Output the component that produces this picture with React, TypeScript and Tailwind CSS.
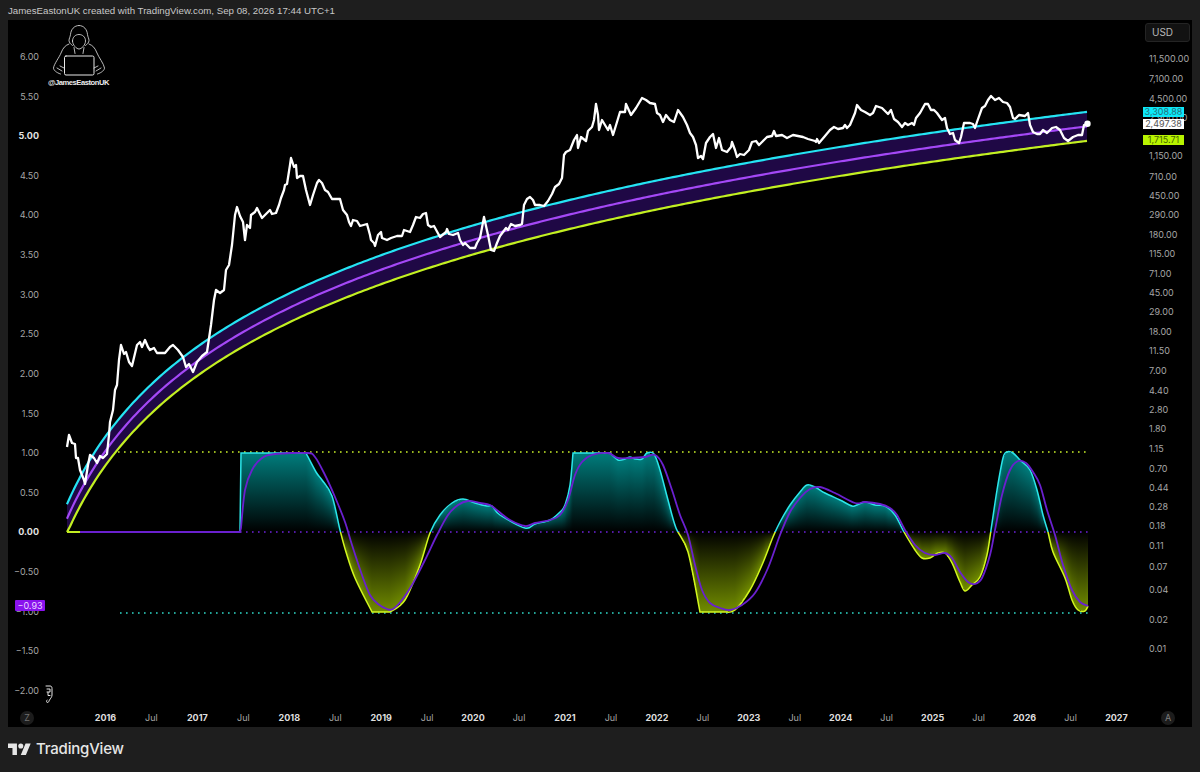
type Pt = [number, number];

// page coordinates, the svg viewBox is offset so they can be read straight off the screenshot
const price: Pt[] = [
  [67,447],[69,435],[72,443],[75,444],[76,458],[78,458],[80,470],[84,480],[85,484],[88,465],[90,455],[94,458],[97,463],[100,456],[103,458],[107,454],[109,435],[110,422],[113,410],[115,390],[117,385],[119,360],[121,345],[124,354],[126,352],[129,362],[132,366],[137,345],[140,342],[142,347],[145,340],[148,347],[150,350],[154,348],[157,353],[165,353],[170,347],[173,345],[178,350],[183,357],[186,367],[189,364],[193,372],[197,362],[202,356],[207,352],[211,325],[214,300],[216,290],[220,293],[224,290],[226,270],[229,265],[232,245],[235,215],[237,207],[240,216],[243,222],[245,240],[247,225],[250,228],[251,215],[255,212],[257,208],[262,218],[267,213],[270,210],[272,214],[276,213],[279,205],[281,198],[284,190],[285,185],[287,184],[290,165],[291,158],[294,167],[296,165],[297,178],[300,176],[303,176],[306,190],[310,205],[313,195],[317,183],[319,180],[322,183],[325,190],[328,192],[332,199],[336,199],[340,199],[343,210],[347,215],[349,222],[351,226],[353,220],[357,221],[360,226],[367,224],[370,235],[371,240],[374,243],[375,246],[378,235],[381,232],[382,238],[387,240],[391,238],[397,236],[402,236],[404,230],[410,232],[413,225],[416,217],[420,218],[423,214],[426,213],[428,225],[431,227],[434,226],[440,237],[446,232],[447,229],[449,234],[453,235],[458,233],[460,240],[463,245],[465,243],[470,248],[475,248],[477,243],[480,238],[484,217],[488,235],[491,250],[494,251],[497,243],[500,236],[503,232],[506,228],[508,230],[511,224],[515,226],[520,225],[522,224],[524,205],[527,199],[530,197],[533,200],[535,205],[540,205],[544,206],[548,201],[552,194],[555,187],[559,184],[562,178],[564,155],[566,152],[570,150],[574,140],[577,135],[578,148],[581,137],[586,141],[588,131],[592,127],[594,120],[596,104],[598,115],[599,130],[602,120],[605,125],[608,130],[610,125],[613,135],[617,122],[620,112],[625,112],[626,104],[631,115],[636,108],[642,98],[646,100],[650,103],[655,104],[657,113],[660,115],[663,122],[666,115],[670,120],[674,122],[678,110],[683,117],[687,125],[690,133],[693,137],[696,145],[698,158],[701,156],[703,159],[706,143],[710,137],[713,134],[716,148],[719,138],[722,150],[727,152],[731,147],[732,142],[735,150],[737,157],[740,154],[744,155],[749,150],[752,142],[756,141],[759,145],[763,141],[767,137],[772,136],[774,131],[776,136],[782,135],[787,138],[793,135],[803,137],[808,139],[815,141],[816,142],[817,139],[819,143],[825,136],[830,130],[834,127],[838,129],[843,128],[845,125],[847,128],[850,125],[855,113],[857,105],[861,110],[865,112],[870,115],[873,113],[876,106],[882,108],[886,112],[888,114],[891,110],[894,119],[898,122],[902,127],[905,123],[908,125],[912,123],[914,125],[916,118],[920,113],[925,104],[928,104],[931,110],[934,110],[937,113],[942,120],[945,118],[947,128],[950,134],[953,133],[955,140],[959,143],[961,137],[964,123],[970,123],[973,124],[975,128],[977,122],[982,108],[985,106],[988,100],[991,96],[995,100],[999,98],[1003,102],[1007,103],[1010,107],[1013,118],[1015,119],[1019,115],[1025,116],[1028,113],[1030,125],[1033,132],[1037,134],[1040,134],[1043,130],[1047,133],[1052,128],[1056,127],[1060,130],[1064,138],[1068,141],[1073,137],[1078,135],[1082,135],[1084,125],[1088,124],
];

// the three bands are the same log curve, shifted
const band = (k: number): Pt[] => {
  const pts: Pt[] = [];
  for (let x = 67; x <= 1088; x += 3) pts.push([x, Math.min(532, k - 135 * Math.log((x - 8) / 282))]);
  return pts;
};
const upper = band(293);
const middle = band(307.5);
const lower = band(322);

// split at the sharp corners so the smoothing does not overshoot there
const oscSegments: Pt[][] = [
  [[240,532],[241,453]],
  [[241,453],[306,453]],
  [[306,453],[316,472],[322,480],[332,496],[340,530],[346,552],[355,578],[372,612]],
  [[372,612],[390,612]],
  [[390,612],[405,600],[420,565],[430,533],[440,515],[452,503],[463,499],[475,503],[487,506],[492,506],[500,515],[525,528],[535,524],[550,520],[560,512],[565,505],[570,485],[573,453]],
  [[573,453],[610,453]],
  [[610,453],[618,460],[625,459],[630,457],[635,459],[642,459],[647,453],[654,454],[660,470],[668,500],[676,528],[688,552],[700,612]],
  [[700,612],[725,612]],
  [[725,612],[735,610],[750,590],[762,565],[773,537],[780,522],[790,505],[800,492],[807,485],[815,487],[825,493],[840,500],[852,506],[857,505],[865,502],[875,505],[885,506],[895,515],[904,532],[915,550],[922,558],[930,558],[938,553],[945,553],[952,563],[960,582],[965,591],[972,585],[980,577],[987,555],[991,530],[997,490],[1003,458],[1007,452],[1013,453],[1020,460],[1030,470],[1037,490],[1043,515],[1048,532],[1053,552],[1065,578],[1072,600],[1078,610],[1085,611],[1088,606]],
];

const oscSignal: Pt[] = [[241,528],[245,490],[252,470],[262,458],[275,454],[307,453],[315,457],[325,475],[335,497],[345,522],[352,545],[362,575],[370,595],[378,604],[387,609],[393,609],[402,600],[412,585],[425,560],[437,535],[448,515],[458,505],[468,501],[480,503],[490,505],[498,511],[510,520],[525,526],[535,523],[550,520],[560,515],[568,500],[575,475],[582,462],[592,455],[608,453],[618,458],[630,458],[645,457],[655,455],[663,465],[672,490],[680,515],[688,535],[695,565],[702,590],[710,603],[720,608],[730,610],[742,605],[755,593],[768,568],[780,535],[790,512],[800,498],[810,489],[820,487],[835,493],[855,503],[865,502],[880,504],[890,508],[897,515],[905,530],[915,545],[925,553],[935,555],[945,553],[952,558],[960,572],[968,582],[975,584],[982,578],[990,555],[995,530],[1002,495],[1010,470],[1018,461],[1026,463],[1033,472],[1040,485],[1047,510],[1055,535],[1063,565],[1072,590],[1080,602],[1088,606]];

function smooth(pts: Pt[]) {
  let d = `${pts[0][0]} ${pts[0][1]}`;
  for (let i = 0; i < pts.length - 1; i++) {
    const p0 = pts[i - 1] ?? pts[i];
    const p1 = pts[i];
    const p2 = pts[i + 1];
    const p3 = pts[i + 2] ?? p2;
    const c1x = p1[0] + (p2[0] - p0[0]) / 6;
    const c1y = p1[1] + (p2[1] - p0[1]) / 6;
    const c2x = p2[0] - (p3[0] - p1[0]) / 6;
    const c2y = p2[1] - (p3[1] - p1[1]) / 6;
    d += ` C${c1x} ${c1y} ${c2x} ${c2y} ${p2[0]} ${p2[1]}`;
  }
  return d;
}

const lineOf = (pts: Pt[]) => 'M' + pts.map((p) => p.join(' ')).join(' L');
const oscLine = 'M' + oscSegments.map(smooth).join(' L');
const bandArea = 'M' + smooth(upper) + ' L' + smooth([...lower].reverse()) + ' Z';

// the fill fades from the line to zero in every single column, not across the whole pane
const oscFlat = oscSegments.flat();
const oscAt = (x: number) => {
  for (let i = 0; i < oscFlat.length - 1; i++) {
    const [x1, y1] = oscFlat[i];
    const [x2, y2] = oscFlat[i + 1];
    if (x >= x1 && x <= x2 && x2 > x1) return y1 + ((y2 - y1) * (x - x1)) / (x2 - x1);
  }
  return 532;
};
const oscColumns: { x: number; y: number; h: number; up: boolean; o: number }[] = [];
for (let x = 241; x < 1088; x++) {
  const y = oscAt(x + 0.5);
  const h = Math.abs(532 - y);
  if (h < 1) continue;
  oscColumns.push({ x, y: Math.min(y, 532), h, up: y < 532, o: Math.min(1, 0.35 + h / 35) });
}

const leftTicks = ['6.00','5.50','5.00','4.50','4.00','3.50','3.00','2.50','2.00','1.50','1.00','0.50','0.00','−0.50','−1.00','−1.50','−2.00'];

// 1,800.00 sits fully behind the lime price label in the reference
const rightTicks: [string, number][] = [
  ['11,500.00',59],['7,100.00',79],['4,500.00',98.5],['2,900.00',118],['',137],['1,150.00',156],['710.00',177],['450.00',196],['290.00',215],['180.00',235],['115.00',254],['71.00',274],['45.00',293],['29.00',312],['18.00',332],['11.50',351],['7.00',371],['4.40',391],['2.80',410],['1.80',429],['1.15',449],['0.70',469],['0.44',488],['0.28',507],['0.18',526],['0.11',546],['0.07',567],['0.04',590],['0.02',620],['0.01',649],
];

const timeTicks = ['2016','Jul','2017','Jul','2018','Jul','2019','Jul','2020','Jul','2021','Jul','2022','Jul','2023','Jul','2024','Jul','2025','Jul','2026','Jul','2027'];

function HackerLogo() {
  return (
    <g fill="none" stroke="#e8e8e8" strokeWidth="0.8" strokeLinejoin="round" strokeLinecap="round">
      <path d="M79 25.5c-5 0-8 4-8.500 9-.3 2.500-1.500 4-1.500 6 0 2 2 4 3.500 5M79 25.500c5 0 8 4 8.500 9 .3 2.500 1.500 4 1.500 6 0 2-2 4-3.500 5" />
      <path d="M72.500 41c0-4 3-6.500 6.500-6.500s6.500 2.500 6.500 6.500c0 4-4 8-6.500 8s-6.500-4-6.500-8z" />
      <path d="M69 44c-4 1.500-6 4-8 9-1.500 4-7 11-7.500 15 0 2 2.500 4.500 7 6M89 44c4 1.500 6 4 8 9 1.500 4 7 11 7.500 15 0 2-2.500 4.500-7 6" />
      <path d="M74 47.500l1 6M84 47.500l-1 6M60 66l4 2M98 66l-4 2M57 68l5 3M101 68l-5 3" />
      <rect x="64.500" y="56" width="29.500" height="19" rx="1.500" strokeWidth="1" />
    </g>
  );
}

export default function App() {
  return (
    <div className="flex h-[772px] w-[1200px] flex-col overflow-hidden bg-[#1e1e1e] font-['Inter',sans-serif]">
      <div className="flex h-5 items-center px-2 pt-0.5 font-['Liberation_Sans',sans-serif] text-[9.700px] text-[#c8c8c8]">
        JamesEastonUK created with TradingView.com, Sep 08, 2026 17:44 UTC+1
      </div>

      <div className="mx-2 grid h-[707px] grid-cols-[32px_1097px_55px] grid-rows-[688px_19px] bg-black">
        {/* left scale */}
        <div className="relative flex flex-col items-end pr-px pt-[17px] text-[9px] text-[#a6a6a6]">
          {leftTicks.map((t) => (
            <div key={t} className={`flex h-[39.62px] shrink-0 items-center ${t === '5.00' || t === '0.00' ? 'font-bold text-[#e4e4e4]' : ''}`}>
              {t}
            </div>
          ))}
          <div className="absolute left-[7px] top-[580px] flex h-[11px] w-[30px] items-center justify-center rounded-[1px] bg-[#8a12ee] text-[9px] text-[#e9d8ff]">
            −0.93
          </div>
        </div>

        {/* plot */}
        <div className="relative z-10">
          <svg width="1097" height="688" viewBox="40 20 1097 688" className="block">
            <defs>
              <linearGradient id="colUp" x1="0" y1="0" x2="0" y2="1">
                <stop offset="0" stopColor="#007c7c" />
                <stop offset="1" stopColor="#000000" />
              </linearGradient>
              <linearGradient id="colDown" x1="0" y1="0" x2="0" y2="1">
                <stop offset="0" stopColor="#000000" />
                <stop offset="1" stopColor="#718c00" />
              </linearGradient>
              <clipPath id="aboveZero"><rect x="40" y="20" width="1097" height="512" /></clipPath>
              <clipPath id="belowZero"><rect x="40" y="532" width="1097" height="176" /></clipPath>
            </defs>

            <path d={bandArea} fill="#1f0845" />
            <path d={lineOf([[67,532],[80,532]])} stroke="#c3ee22" strokeWidth="2" fill="none" />
            <path d={'M' + smooth(upper)} stroke="#25e4f4" strokeWidth="2.200" fill="none" />
            <path d={'M' + smooth(middle)} stroke="#a448f6" strokeWidth="2.200" fill="none" />
            <path d={'M' + smooth(lower)} stroke="#c3f022" strokeWidth="2.200" fill="none" />

            <g shapeRendering="crispEdges">
              {oscColumns.map((c) => (
                <rect key={c.x} x={c.x} y={c.y} width="1" height={c.h} fill={c.up ? 'url(#colUp)' : 'url(#colDown)'} opacity={c.o} />
              ))}
            </g>

            <line x1="118" y1="452" x2="1090" y2="452" stroke="#c9f02a" strokeWidth="1.600" strokeDasharray="1.600 4.400" />
            <line x1="240" y1="532" x2="1090" y2="532" stroke="#6d22d8" strokeWidth="1.600" strokeDasharray="1.600 4.400" />
            <line x1="120" y1="613" x2="1090" y2="613" stroke="#2fd8c8" strokeWidth="1.600" strokeDasharray="1.600 4.400" />

            <path d={oscLine} fill="none" stroke="#2be6ea" strokeWidth="1.500" clipPath="url(#aboveZero)" />
            <path d={oscLine} fill="none" stroke="#d2f71e" strokeWidth="1.500" clipPath="url(#belowZero)" />
            <path d={'M80 532 L240 532 L' + smooth(oscSignal)} fill="none" stroke="#6a20cf" strokeWidth="1.800" />

            <path d={lineOf(price)} fill="none" stroke="#ffffff" strokeWidth="2.300" strokeLinejoin="round" />
            <circle cx="1087.500" cy="123.700" r="3.200" fill="#ffffff" />

            <HackerLogo />
            <path d="M46 686h4c1.500 0 2 1 2 2.500v6.500c0 2-1.500 3.500-2.500 5-.7 1-.7 2.500-2 2.500s-1-2-.5-2.500M47 689h3v3h-3M48 692.500v3h2" fill="none" stroke="#e8e8e8" strokeWidth="1" strokeLinejoin="round" strokeLinecap="round" />
          </svg>
          <div className="absolute left-[8px] top-[57px] whitespace-nowrap font-['Liberation_Sans',sans-serif] text-[7.600px] font-bold tracking-[-0.45px] text-[#ececec]">
            @JamesEastonUK
          </div>
        </div>

        {/* right scale */}
        <div className="relative text-[9px] text-[#a6a6a6]">
          <div className="absolute left-[8px] top-[3px] flex h-[19px] w-[45px] items-center rounded-[3px] border border-[#242424] bg-[#121212] pl-[6px] text-[10px] text-[#b8b8b8]">
            USD
          </div>
          <div className="flex flex-col pl-3 pt-[32px]">
            {rightTicks.map(([label, y], i) => {
              const next = rightTicks[i + 1]?.[1] ?? y + 20;
              return (
                <div key={y} className="flex items-start leading-[13px]" style={{ height: next - y }}>
                  {label}
                </div>
              );
            })}
          </div>
          <div className="absolute left-[6px] top-[87px] flex h-[10px] w-[41px] items-center justify-center bg-[#0ce8f8] text-[9px] text-[#256f78]">3,308.88</div>
          <div className="absolute left-[6px] top-[99px] flex h-[10px] w-[41px] items-center justify-center bg-white text-[9px] text-[#555555]">2,497.38</div>
          <div className="absolute left-[6px] top-[115px] flex h-[10px] w-[41px] items-center justify-center bg-[#b8f400] text-[9px] text-[#466400]">1,715.71</div>
        </div>

        {/* bottom row */}
        <div className="flex items-center pl-3">
          <div className="flex h-[14px] w-[14px] items-center justify-center rounded-full bg-[#1c1c1c] text-[9px] text-[#707070]">Z</div>
        </div>
        <div className="flex items-center pl-[42.500px] text-[9px]">
          {timeTicks.map((t, i) => (
            <div key={i} className={`flex h-[14px] w-[45.960px] shrink-0 items-center justify-center ${t === 'Jul' ? 'text-[#a6a6a6]' : 'font-bold text-[#dedede]'}`}>
              {t}
            </div>
          ))}
        </div>
        <div className="flex items-center pl-6">
          <div className="flex h-[14px] w-[14px] items-center justify-center rounded-full bg-[#1c1c1c] text-[9px] text-[#808080]">A</div>
        </div>
      </div>

      <div className="flex flex-1 items-center gap-[5px] pl-[8px]">
        <svg width="23" height="13" viewBox="0 4 36 19" className="block" fill="#e6e6e6">
          <path d="M14 22H7V11H0V4h14v18zM28 22h-8l7.500-18h8L28 22z" />
          <circle cx="20" cy="8" r="4" />
        </svg>
        <span className="text-[15px] font-medium tracking-[-0.2px] text-[#e6e6e6]">TradingView</span>
      </div>
    </div>
  );
}
